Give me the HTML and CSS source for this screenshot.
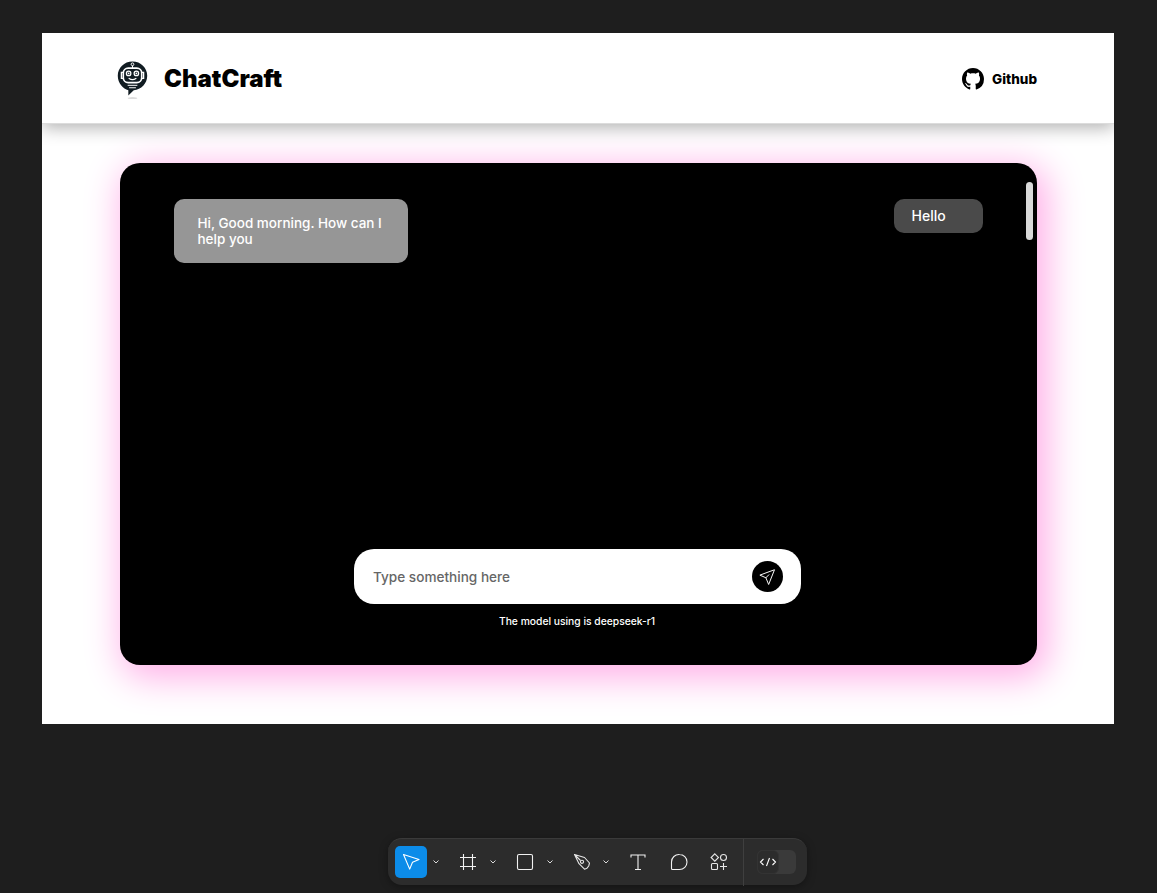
FILE: index.html
```html
<!DOCTYPE html>
<html lang="en">
<head>
<meta charset="utf-8">
<title>ChatCraft</title>
<link rel="stylesheet" href="styles.css">
</head>
<body>
<main class="frame">
  <header class="header">
    <div class="brand">
      <svg class="logo" viewBox="0 0 32 40" aria-hidden="true">
        <path d="M16 1C7.400 1 .8 7.600.8 15.600c0 7.800 5.600 13.600 10.900 14.900v5.500l5.600-5.500C25 30 31.200 23.600 31.200 15.600 31.200 7.600 24.600 1 16 1z" fill="#111c22"/>
        <ellipse cx="16" cy="38.600" rx="5" ry=".6" fill="#bbb"/>
        <circle cx="16" cy="3.800" r="1.400" fill="none" stroke="#fff" stroke-width="1"/>
        <path d="M16 5.200v2.500" stroke="#fff" stroke-width="1.100"/>
        <rect x="6.500" y="7.700" width="19" height="15" rx="5" fill="none" stroke="#fff" stroke-width="1.700"/>
        <path d="M6.500 12.200H4.500v6h2M25.500 12.200h2v6h-2" fill="none" stroke="#fff" stroke-width="1.300"/>
        <circle cx="12" cy="13.200" r="2.300" fill="none" stroke="#fff" stroke-width="1.300"/>
        <circle cx="20" cy="13.200" r="2.300" fill="none" stroke="#fff" stroke-width="1.300"/>
        <circle cx="12" cy="13.200" r=".9" fill="#fff"/>
        <circle cx="20" cy="13.200" r=".9" fill="#fff"/>
        <path d="M12.500 18.400q3.500 2.300 7 0" fill="none" stroke="#fff" stroke-width="1.300" stroke-linecap="round"/>
        <path d="M11 25.500h10M12.500 28h7" stroke="#fff" stroke-width="1"/>
      </svg>
      <h1 class="title">ChatCraft</h1>
    </div>
    <a class="github">
      <svg class="github-icon" viewBox="0 0 16 16" aria-hidden="true"><path d="M8 0C3.580 0 0 3.580 0 8c0 3.540 2.290 6.530 5.470 7.590.4.070.55-.17.55-.38 0-.19-.01-.82-.01-1.490-2.010.37-2.530-.49-2.690-.94-.09-.23-.48-.94-.82-1.130-.28-.15-.68-.52-.01-.53.63-.01 1.080.58 1.230.82.72 1.210 1.870.87 2.330.66.070-.52.280-.87.510-1.070-1.780-.2-3.640-.89-3.640-3.950 0-.87.310-1.590.820-2.150-.080-.2-.360-1.020.080-2.120 0 0 .670-.21 2.200.820.640-.180 1.320-.270 2-.270s1.360.090 2 .270c1.530-1.040 2.200-.820 2.200-.820.440 1.100.160 1.920.080 2.120.510.560.820 1.270.820 2.150 0 3.070-1.870 3.750-3.650 3.950.290.250.540.730.540 1.480 0 1.070-.010 1.930-.010 2.200 0 .210.150.460.550.380A8.010 8.010 0 0 0 16 8c0-4.420-3.580-8-8-8z"/></svg>
      <span>Github</span>
    </a>
  </header>
  <section class="chat">
    <div class="messages">
      <p class="bubble bubble-bot">Hi, Good morning. How can I help you</p>
      <p class="bubble bubble-user">Hello</p>
    </div>
    <div class="scrollbar"></div>
    <div class="composer">
      <div class="input">
        <span class="placeholder">Type something here</span>
        <button class="send" type="button" aria-label="Send">
          <svg viewBox="0 0 24 24" fill="none" stroke="#fff" stroke-width="1.300" stroke-linejoin="round" stroke-linecap="round"><path d="M21.500 2.500 2.500 9.500l8 3.500 3.500 8.500zM10.500 13l4-4"/></svg>
        </button>
      </div>
      <p class="model">The model using is deepseek-r1</p>
    </div>
  </section>
</main>
<nav class="toolbar">
  <span class="tool tool-active">
    <svg class="ico" viewBox="0 0 20 20" fill="none" stroke="#fff" stroke-width="1.100" stroke-linejoin="round"><path d="M2.500 2.500 18 7.500l-6.500 2.800-2.800 6.800z"/></svg>
  </span>
  <svg class="caret" viewBox="0 0 8 6" fill="none" stroke="#ddd" stroke-width="1"><path d="M1.500 1.500 4 4l2.500-2.500"/></svg>
  <span class="tool">
    <svg class="ico" viewBox="0 0 20 20" fill="none" stroke="#f2f2f2" stroke-width="1.100"><path d="M5.500 2v16M14.500 2v16M2 5.500h16M2 14.500h16"/></svg>
  </span>
  <svg class="caret" viewBox="0 0 8 6" fill="none" stroke="#ddd" stroke-width="1"><path d="M1.500 1.500 4 4l2.500-2.500"/></svg>
  <span class="tool">
    <svg class="ico" viewBox="0 0 20 20" fill="none" stroke="#f2f2f2" stroke-width="1.100"><rect x="2.500" y="2.500" width="15" height="15" rx="1.500"/></svg>
  </span>
  <svg class="caret" viewBox="0 0 8 6" fill="none" stroke="#ddd" stroke-width="1"><path d="M1.500 1.500 4 4l2.500-2.500"/></svg>
  <span class="tool">
    <svg class="ico" viewBox="0 0 20 20" fill="none" stroke="#e6e6e6" stroke-width="1.100" stroke-linejoin="round"><g transform="translate(1.500 0)"><path d="M2 2.500 12 5.500l5 5.500-.8 3-1.700 2.200-2.500 1-5.500-5.500zM2 2.500l6 6"/><circle cx="9.500" cy="9.800" r="1.600"/></g></svg>
  </span>
  <svg class="caret" viewBox="0 0 8 6" fill="none" stroke="#ddd" stroke-width="1"><path d="M1.500 1.500 4 4l2.500-2.500"/></svg>
  <span class="tool tool-spaced">
    <svg class="ico" viewBox="0 0 20 20" fill="none" stroke="#f2f2f2" stroke-width="1.100"><path d="M3 5.500V3h14v2.500M10 3v14.500M7 17.500h6"/></svg>
  </span>
  <span class="tool tool-spaced">
    <svg class="ico" viewBox="0 0 20 20" fill="none" stroke="#f2f2f2" stroke-width="1.100"><path d="M10.500 2.500a7.500 7.500 0 1 1 0 15H3.500c-.6 0-1-.4-1-1V10a7.500 7.500 0 0 1 8-7.500z"/></svg>
  </span>
  <span class="tool">
    <svg class="ico" viewBox="0 0 20 20" fill="none" stroke="#e6e6e6" stroke-width="1.100"><path d="M5.800 1.800 9.500 5.500 5.800 9.200 2.100 5.500z"/><circle cx="14.500" cy="5.500" r="3"/><rect x="2.500" y="11.500" width="6" height="6" rx="1"/><path d="M14.500 11v7M11 14.500h7"/></svg>
  </span>
  <span class="divider"></span>
  <span class="toggle">
    <span class="toggle-knob">
      <svg viewBox="0 0 18 12" fill="none" stroke="#fff" stroke-width="1.100"><path d="M4.500 3 1.500 6l3 3M13.500 3l3 3-3 3M10.500 2 7.500 10"/></svg>
    </span>
  </span>
</nav>
</body>
</html>
```
FILE: styles.css
```css
* { box-sizing: border-box; }

html, body { height: 100%; }

body {
  margin: 0;
  padding: 33px 43px 0 42px;
  background: #1e1e1e;
  font-family: Inter, "Liberation Sans", sans-serif;
  overflow: hidden;
}

.frame {
  height: 691px;
  background: #fff;
  display: flex;
  flex-direction: column;
  align-items: center;
  overflow: hidden;
}

.header {
  width: 100%;
  height: 91px;
  flex: none;
  padding: 0 77px 0 75px;
  display: flex;
  align-items: center;
  justify-content: space-between;
  background: #fff;
  border-bottom: 1px solid #dcdcdc;
  box-shadow: 0 4px 16px rgba(0, 0, 0, .3);
  position: relative;
}

.brand { display: flex; align-items: center; gap: 16px; }

.logo { width: 31px; height: 40px; display: block; margin-top: 3px; }

.title {
  margin: 1px 0 0;
  font-size: 24px;
  font-weight: 900;
  line-height: 30px;
  color: #000;
}

.github {
  display: flex;
  align-items: center;
  gap: 8px;
  font-size: 13.500px;
  font-weight: 800;
  color: #000;
  margin-top: 2px;
}

.github-icon { width: 22px; height: 22px; display: block; margin-left: -1px; }

.chat {
  position: relative;
  width: 917px;
  height: 502px;
  margin-top: 39px;
  padding: 36px 54px 37px;
  flex: none;
  display: flex;
  flex-direction: column;
  justify-content: space-between;
  background: #000;
  border-radius: 20px;
  box-shadow: 6px 8px 36px 5px #ffb0e8;
}

.messages {
  display: flex;
  justify-content: space-between;
  align-items: flex-start;
}

.bubble {
  margin: 0;
  color: #fff;
  font-weight: 500;
  line-height: 16px;
  border-radius: 10px;
}

.bubble-bot {
  width: 234px;
  padding: 16px 24px;
  background: #969696;
  font-size: 13.500px;
}

.bubble-user {
  width: 89px;
  padding: 9px 18px;
  background: #4a4a4a;
  font-size: 14px;
}

.scrollbar {
  position: absolute;
  top: 19px;
  right: 4px;
  width: 7px;
  height: 58px;
  border-radius: 4px;
  background: #d9d9d9;
}

.composer {
  align-self: center;
  width: 447px;
  margin-right: 2px;
  display: flex;
  flex-direction: column;
  align-items: center;
}

.input {
  width: 100%;
  height: 55px;
  padding: 0 18px 0 19.500px;
  display: flex;
  align-items: center;
  justify-content: space-between;
  background: #fff;
  border-radius: 20px;
}

.placeholder {
  color: #666;
  font-size: 13.600px;
  font-weight: 500;
}

.send {
  width: 31px;
  height: 31px;
  padding: 6.500px;
  border: 0;
  border-radius: 50%;
  background: #000;
  display: flex;
}

.send svg { width: 18px; height: 18px; display: block; }

.model {
  margin: 10px 0 0;
  color: #fff;
  font-size: 10.300px;
  font-weight: 500;
  line-height: 14px;
}

.toolbar {
  position: absolute;
  left: 388px;
  top: 838px;
  width: 419px;
  height: 47px;
  padding: 0 11px 0 7px;
  display: flex;
  align-items: center;
  background: #2c2c2c;
  border-radius: 14px;
  border-top: 1px solid #3a3a3a;
  box-shadow: 0 2px 8px rgba(0, 0, 0, .35);
}

.tool {
  width: 32px;
  height: 32px;
  flex: none;
  display: flex;
  align-items: center;
  justify-content: center;
  border-radius: 5px;
}

.tool-spaced { margin-right: 8.500px; }

.tool-active { background: #0c8ce9; }

.ico { width: 20px; height: 20px; display: block; }

.caret {
  width: 8px;
  height: 6px;
  flex: none;
  margin: 0 11.750px 0 5px;
}

.divider {
  width: 1px;
  height: 47px;
  margin: 0 13px 0 8px;
  background: #3f3f3f;
  flex: none;
}

.toggle {
  width: 39px;
  height: 24px;
  border-radius: 6px;
  background: #3a3a3a;
  display: flex;
  flex: none;
}

.toggle-knob {
  width: 22px;
  height: 24px;
  border-radius: 6px;
  background: #2c2c2c;
  border: 1px solid #333;
  display: flex;
  align-items: center;
  justify-content: center;
}

.toggle-knob svg { width: 18px; height: 12px; display: block; flex: none; }
```
